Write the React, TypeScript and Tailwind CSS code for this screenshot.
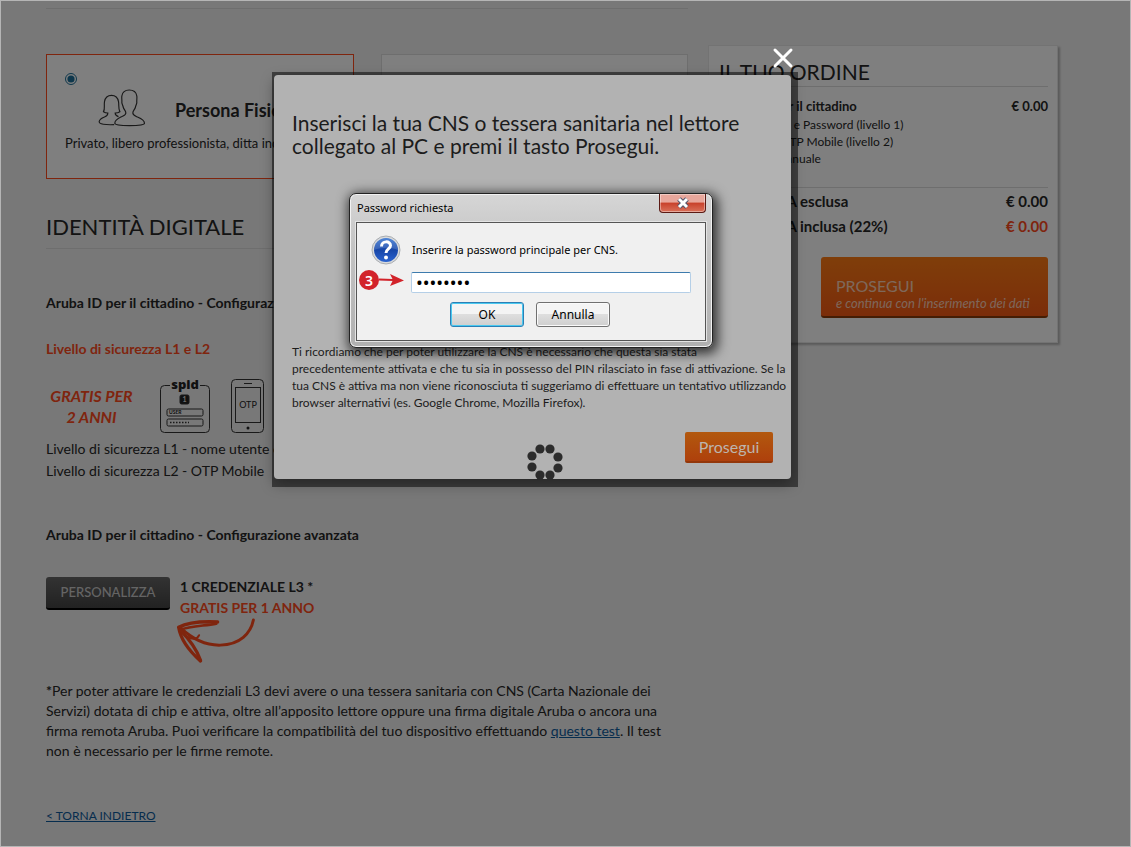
import { useState } from 'react';
import type { ReactNode } from 'react';

function PeopleIcon() {
  return (
    <svg viewBox="295 264 143 114" className="h-[38px] w-[48px]" fill="none" stroke="#333" strokeWidth="3.5">
      <path d="M345 367c-1-9 8-14 18-19 8-4 15-5 15-12 0-7-6-10-8-18-1-6-4-9-4-14 1-4-1-12 0-19 2-13 11-18 22-18s21 5 23 18c1 7-1 15 0 19 0 5-3 8-4 14-2 8-8 11-8 18 0 7 7 9 14 12 12 5 21 10 21 19 0 5-20 7-45 7-26 0-44-1-44-7z" />
      <path d="M343 371c-26 1-46-1-45-9 1-8 8-11 16-14 6-2 10-5 10-12-5 0-9-1-13-4 5-8 1-19 3-30 2-12 10-19 21-19s19 7 21 19c2 11-1 22 4 30-4 3-8 4-14 4 0 6 4 9 10 11" />
    </svg>
  );
}

function SpidIcon() {
  return (
    <svg viewBox="0 0 50 56" className="h-[56px] w-[50px] overflow-visible" fill="none" stroke="#333">
      <path d="M10 6.500H4.500a4 4 0 0 0-4 4v39a4 4 0 0 0 4 4h41a4 4 0 0 0 4-4v-39a4 4 0 0 0-4-4H40" />
      <rect x="7" y="30" width="36" height="7" rx="1.500" />
      <rect x="7" y="40" width="36" height="7" rx="1.500" />
      <rect x="20" y="16" width="9" height="9" rx="1.500" fill="#222" />
      <g stroke="none" fill="#222">
        <text x="25" y="10" textAnchor="middle" fontSize="13" fontWeight="800" fontFamily="Open Sans, sans-serif">
          spid
        </text>
        <text x="24.500" y="23" textAnchor="middle" fontSize="7" fontWeight="700" fill="#ddd" fontFamily="Lato, sans-serif">
          1
        </text>
        <text x="9" y="35" fontSize="5" fontWeight="700" fontFamily="Lato, sans-serif">
          USER
        </text>
      </g>
      <path d="M10 43.500h19" strokeWidth="1.500" strokeDasharray="1.500 1.500" />
    </svg>
  );
}

function PhoneIcon() {
  return (
    <svg viewBox="0 0 34 54" className="h-[54px] w-[34px]" fill="none" stroke="#333">
      <rect x="0.500" y="0.500" width="32" height="53" rx="4" />
      <rect x="4.500" y="8.500" width="25" height="35" />
      <path d="M13 4.500h8" />
      <circle cx="17" cy="49" r="1.500" fill="#222" stroke="none" />
      <text x="17" y="29" textAnchor="middle" fontSize="9" fill="#222" stroke="none" fontFamily="Lato, sans-serif">
        OTP
      </text>
    </svg>
  );
}

function CurvedArrow() {
  return (
    <svg viewBox="0 0 240 136" className="-ml-[3px] h-[45px] w-[80px]" fill="none" stroke="#ff4a1c" strokeLinecap="round" strokeLinejoin="round">
      <path d="M230 6c-8 40-40 74-100 76-40 1-80-14-120-52" strokeWidth="9" />
      <path d="M122 12C80 10 30 14 4 28c6 36 30 70 66 102" strokeWidth="10" />
      <path d="M118 17C80 24 40 24 8 36" strokeWidth="8" />
      <path d="M8 36c24 24 50 56 62 92" strokeWidth="10" />
      <path d="M30 56c14 10 30 10 36-4" strokeWidth="6" />
    </svg>
  );
}

function QuestionIcon() {
  return (
    <svg viewBox="0 0 30 30" className="size-[30px]">
      <defs>
        <linearGradient id="ball" x1="0" y1="0" x2="0" y2="1">
          <stop offset="0" stopColor="#2f6fd0" />
          <stop offset="0.500" stopColor="#1746a8" />
          <stop offset="1" stopColor="#2a63cf" />
        </linearGradient>
      </defs>
      <circle cx="15" cy="15" r="14" fill="#d8dadc" stroke="#a9adb2" />
      <circle cx="15" cy="15" r="12" fill="url(#ball)" />
      <path d="M3 15a12 12 0 0 1 24 0c-7-3-16-3-24 0z" fill="#fff" opacity="0.150" />
      <path d="M10.500 11.500c0-6 9-6 9-1 0 3.500-4.500 3.500-4.500 7.500" fill="none" stroke="#fff" strokeWidth="3" />
      <circle cx="15" cy="22.500" r="2" fill="#fff" />
    </svg>
  );
}

const SPINNER_DOTS = [
  [13, 5],
  [23, 5],
  [31, 13],
  [31, 24],
  [23, 31],
  [13, 31],
  [5, 23],
  [5, 12],
];

function Spinner() {
  return (
    <svg viewBox="0 0 36 36" className="size-9" fill="#2c2c2c">
      {SPINNER_DOTS.map(([x, y]) => (
        <circle key={`${x}-${y}`} cx={x} cy={y} r="4.6" />
      ))}
    </svg>
  );
}

function WinButton({ focused, children }: { focused?: boolean; children: ReactNode }) {
  return (
    <button
      type="button"
      className={`h-[25px] w-[74px] rounded-[3px] border bg-linear-to-b from-[#f4f4f4] from-50% via-[#dedede] via-50% to-[#cfcfcf] text-xs text-black ${
        focused ? 'border-[#2c7fb5] shadow-[inset_0_0_0_1px_#49c9f0]' : 'border-[#707070] shadow-[inset_0_0_0_1px_#fafafa]'
      }`}
    >
      {children}
    </button>
  );
}

function PasswordDialog() {
  const [password, setPassword] = useState('12345678');

  return (
    <div
      role="dialog"
      aria-label="Password richiesta"
      className="absolute left-[75px] top-[118px] w-[364px] rounded-[7px] border border-[#222] bg-linear-to-b from-[#d6d6d6] from-0% via-[#c4c4c4] via-35% to-[#b0b0b0] px-[6px] pb-[6px] font-['Noto_Sans','Open_Sans',sans-serif] text-black shadow-[2px_3px_12px_3px_rgba(0,0,0,0.7),inset_0_0_0_1px_#f2f2f2]"
    >
      <div className="flex h-[28px] items-start justify-between">
        <h2 className="pl-px pt-[5px] text-[11px] leading-[18px]">Password richiesta</h2>
        <button
          type="button"
          aria-label="Chiudi finestra"
          className="flex h-[19px] w-[47px] items-center justify-center rounded-b-[4px] border border-t-0 border-[#5b1a14] bg-linear-to-b from-[#e8a79c] from-45% via-[#c8402a] via-50% to-[#d9705a] shadow-[inset_0_0_0_1px_rgba(255,255,255,0.4)]"
        >
          <svg viewBox="0 0 12 10" className="h-[10px] w-[12px] overflow-visible" fill="none">
            <path d="M2 1l8 8M10 1L2 9" stroke="#53566c" strokeWidth="5" />
            <path d="M2 1l8 8M10 1L2 9" stroke="#fff" strokeWidth="3" />
          </svg>
        </button>
      </div>

      <div className="border border-[#555] bg-[#f0f0f0] px-[14px] pb-[13px] pt-[12px] shadow-[0_0_0_1px_#e4e4e4]">
        <label htmlFor="cns-password" className="flex items-center gap-[11px] text-[11px]">
          <QuestionIcon />
          Inserire la password principale per CNS.
        </label>
        <div className="relative mt-[7px] pl-[40px]">
          <input
            id="cns-password"
            type="password"
            value={password}
            onChange={(e) => setPassword(e.target.value)}
            className="block h-[21px] w-full rounded-[2px] border border-[#b5cfe7] border-t-[#3d7bad] bg-white px-1 text-[18px] outline-none"
          />
          <span className="absolute left-[-12px] top-[-2px] flex items-center">
            <span className="flex size-5 items-center justify-center rounded-full bg-[#d2232a] text-[14px] font-semibold text-white">3</span>
            <svg viewBox="0 0 25 14" className="h-[14px] w-[25px]">
              <path d="M0 6.500l14 0.500" stroke="#d2232a" strokeWidth="2" />
              <path d="M11 1l14 6.500L11 13l3-6z" fill="#d2232a" />
            </svg>
          </span>
        </div>
        <div className="mt-[9px] flex justify-center gap-[12px] pr-[2px]">
          <WinButton focused>OK</WinButton>
          <WinButton>Annulla</WinButton>
        </div>
      </div>
    </div>
  );
}

function CnsModal() {
  return (
    <div className="absolute inset-0 bg-black/50 pr-[61px] pt-[71px]">
      <div className="mx-auto w-[526px] bg-black/50 pb-[8px] pl-[2px] pr-[7px] pt-[3px]">
        <section className="relative rounded-[4px] bg-[#b2b2b2] px-[18px] pt-[36px] text-[#1c1c1c] shadow-[0_5px_14px_rgba(0,0,0,0.35)]">
          <button type="button" aria-label="Chiudi" className="absolute right-[-3px] top-[-28px]">
            <svg viewBox="0 0 22 22" className="size-[22px]" stroke="#fff" strokeWidth="3" strokeLinecap="round">
              <path d="M3 3l16 16M19 3L3 19" />
            </svg>
          </button>
          <h1 className="text-[21px] leading-[23px]">
            Inserisci la tua CNS o tessera sanitaria nel lettore
            <br />
            collegato al PC e premi il tasto Prosegui.
          </h1>
          <p className="-mr-[16px] mt-[186px] text-[12px] leading-[17px]">
            Ti ricordiamo che per poter utilizzare la CNS è necessario che questa sia stata
            <br />
            precedentemente attivata e che tu sia in possesso del PIN rilasciato in fase di attivazione. Se la tua CNS è
            attiva ma non viene riconosciuta ti suggeriamo di effettuare un tentativo utilizzando browser alternativi
            (es. Google Chrome, Mozilla Firefox).
          </p>
          <div className="mt-[21px] flex justify-end">
            <button
              type="button"
              className="h-[31px] w-[88px] rounded-[2px] border-b-2 border-[#93370a] bg-linear-to-b from-[#b2580e] to-[#ae400c] text-[16px] text-[#bdb5ae]"
            >
              Prosegui
            </button>
          </div>
          <div className="-mt-[19px] flex h-[35px] justify-center pl-[24px]">
            <Spinner />
          </div>
          <PasswordDialog />
        </section>
      </div>
    </div>
  );
}

function OrderSummary() {
  return (
    <aside className="mt-[44px] w-[350px] shrink-0 self-start border border-[#e6e6e6] bg-white pb-[24px] pl-[10px] pr-[9px] pt-[13px] shadow-[2px_2px_2px_rgba(0,0,0,0.25)]">
      <h2 className="border-b border-[#dcdcdc] pb-px text-[21px] leading-[26px]">IL TUO ORDINE</h2>
      <div className="flex justify-between pt-[10px] text-[13px] font-bold leading-[19px]">
        <span>Aruba ID per il cittadino</span>
        <span>€ 0.00</span>
      </div>
      <ul className="border-b border-[#dcdcdc] pb-[20px] text-[12px] leading-[17px]">
        <li>Nome Utente e Password (livello 1)</li>
        <li>Credenziali OTP Mobile (livello 2)</li>
        <li>Frequenza: annuale</li>
      </ul>
      <div className="flex justify-between pt-px text-[15px] font-bold leading-[25px]">
        <span>Totale - IVA esclusa</span>
        <span>€ 0.00</span>
      </div>
      <div className="flex justify-between text-[15px] font-bold leading-[25px]">
        <span>Totale - IVA inclusa (22%)</span>
        <span className="text-[#ff4a1c]">€ 0.00</span>
      </div>
      <button
        type="button"
        className="ml-auto mt-[18px] block w-[227px] rounded-[3px] border-b-2 border-[#8a3a08] bg-linear-to-b from-[#ff7c14] to-[#f65a14] px-[15px] pb-[4px] pt-[20px] text-left text-white/70"
      >
        <span className="block text-[16px] leading-[18px]">PROSEGUI</span>
        <span className="block text-[13px] italic leading-[17px]">e continua con l'inserimento dei dati</span>
      </button>
    </aside>
  );
}

export default function App() {
  return (
    <div className="relative min-h-screen border border-[#b5b5b5] bg-[#f0f0f0] font-[Lato,sans-serif] text-[#262626]">
      <div className="flex gap-[20px] pl-[45px] pr-[72px]">
        <main className="min-w-0 flex-1 pb-[20px] pt-[7px] text-[14px]">
          <hr className="border-[#dcdcdc]" />

          <div className="mt-[45px] grid grid-cols-2 gap-[27px]">
            <label className="block h-[125px] border border-[#ff4a1c] bg-white px-[18px] pt-[18px]">
              <input type="radio" name="persona" defaultChecked className="block size-3 accent-[#1d6f98]" />
              <span className="flex items-center gap-[29px] pl-[33px] pt-[4px]">
                <PeopleIcon />
                <b className="whitespace-nowrap pt-[4px] text-[18px]">Persona Fisica</b>
              </span>
              <span className="mt-[6px] block whitespace-nowrap text-[13px] leading-[20px]">
                Privato, libero professionista, ditta ind.
              </span>
            </label>
            <div className="border border-[#dcdcdc] bg-white" />
          </div>

          <h2 className="mt-[34px] border-b border-[#dcdcdc] pb-[7px] text-[22px] leading-[28px]">IDENTITÀ DIGITALE</h2>
          <h3 className="mt-[44px] font-bold leading-[20px]">Aruba ID per il cittadino - Configurazione base</h3>
          <p className="mt-[26px] font-bold leading-[20px] text-[#ff4a1c]">Livello di sicurezza L1 e L2</p>

          <div className="mt-[20px] flex items-start">
            <p className="w-[91px] pt-[6px] text-center text-[16px] font-bold italic leading-[21px] text-[#ff4a1c]">
              GRATIS PER
              <br />2 ANNI
            </p>
            <div className="flex gap-[21px] pl-[23px]">
              <SpidIcon />
              <PhoneIcon />
            </div>
          </div>
          <p className="mt-[3px] leading-[22px]">
            Livello di sicurezza L1 - nome utente e password
            <br />
            Livello di sicurezza L2 - OTP Mobile
          </p>

          <h3 className="mt-[43px] font-bold leading-[20px]">Aruba ID per il cittadino - Configurazione avanzata</h3>
          <div className="mt-[31px] flex gap-[10px]">
            <button
              type="button"
              className="mt-px h-[33px] w-[124px] rounded-[3px] border-b-2 border-black bg-linear-to-b from-[#666] to-[#444] text-[13px] font-medium text-white/70"
            >
              PERSONALIZZA
            </button>
            <div className="font-bold leading-[21px]">
              <p>1 CREDENZIALE L3 *</p>
              <p className="text-[#ff4a1c]">GRATIS PER 1 ANNO</p>
              <CurvedArrow />
            </div>
          </div>

          <p className="mt-[18px] leading-[20px]">
            <b>*</b>Per poter attivare le credenziali L3 devi avere o una tessera sanitaria con CNS (Carta Nazionale dei
            Servizi) dotata di chip e attiva, oltre all’apposito lettore oppure una firma digitale Aruba o ancora una
            firma remota Aruba. Puoi verificare la compatibilità del tuo dispositivo effettuando{' '}
            <a href="#test" className="text-[#0d5a9c] underline">
              questo test
            </a>
            . Il test non è necessario per le firme remote.
          </p>
          <a href="#indietro" className="mt-[45px] inline-block text-[12px] leading-[20px] text-[#0d5a9c] underline">
            &lt; TORNA INDIETRO
          </a>
        </main>
        <OrderSummary />
      </div>
      <CnsModal />
    </div>
  );
}
